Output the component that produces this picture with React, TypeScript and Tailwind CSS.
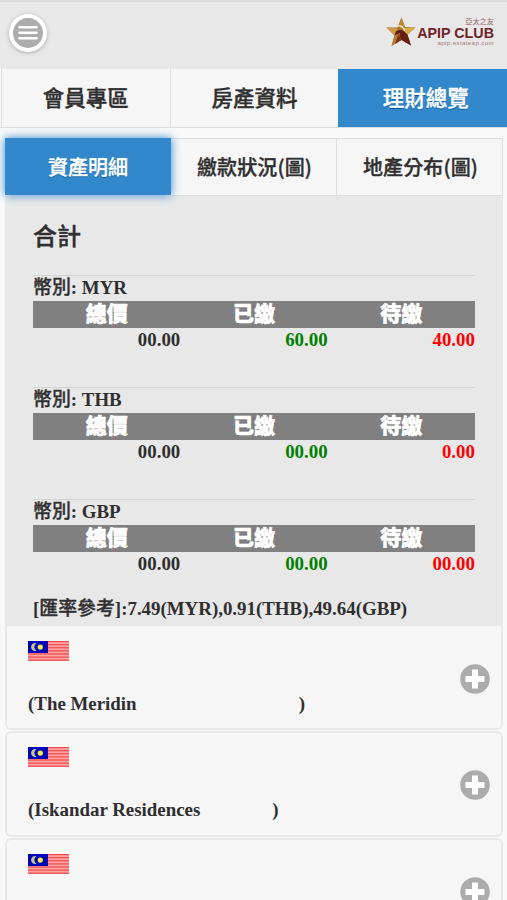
import React, { useState } from "react";

const mainTabs = ["會員專區", "房產資料", "理財總覽"];
const subTabs = ["資產明細", "繳款狀況(圖)", "地產分布(圖)"];

const totals = [
	{ currency: "MYR", total: "00.00", paid: "60.00", unpaid: "40.00" },
	{ currency: "THB", total: "00.00", paid: "00.00", unpaid: "0.00" },
	{ currency: "GBP", total: "00.00", paid: "00.00", unpaid: "00.00" },
];

const properties = [
	{ name: "The Meridin", gap: "w-[162px]" },
	{ name: "Iskandar Residences", gap: "w-[72px]" },
	{ name: "", gap: "" },
];

const Logo = () => (
	<div className="flex items-center mr-[13px] -mt-[3px]">
		<svg className="shrink-0" width="30" height="30" viewBox="0 0 30 30">
			<path d="M15.5 0.5 L19 10 L29.5 10.5 L21.5 17.5 L25 28.5 L15.5 23 L5.5 29 L8.5 18.5 L0.5 10.5 L11.5 10.5 Z" fill="#a8722b" />
			<path d="M15.5 0.5 L19 10 L17 13 Q14.5 9.5 11.5 10.5 Z" fill="#b88a38" />
			<path d="M0.5 10.5 L11 11.5 L14 15 L8.5 18.5 Z" fill="#d09a48" />
			<path d="M8.5 18.5 L10 14 Q14 12 18 14 L21.5 17.5 L25 28.5 L15.5 23 L13 17 Z" fill="#642012" />
			<path d="M8.5 18.5 L14 16 L12.5 23 L5.5 29 Z" fill="#b87932" />
			<path d="M12.5 17 L15.5 23 L9 27 Z" fill="#7b3418" />
			<path d="M18.5 11 L29.5 10.5 L21.5 17.5 L18 14 Z" fill="#d6ae48" />
			<path d="M12 9 Q17.5 8.5 18.5 14" fill="none" stroke="#f9efd5" strokeWidth="1.3" />
		</svg>
		<div className="flex flex-col items-end w-[78px] font-['Liberation_Sans','Noto_Sans_CJK_TC',sans-serif] text-[#6f2527] whitespace-nowrap">
			<span className="text-[7.2px] leading-[8px] text-[#956565]">亞太之友</span>
			<span className="text-[14.3px] leading-[14px] font-bold">APIP CLUB</span>
			<span className="text-[6.2px] leading-[6px] tracking-[0.35px] text-[#a57575]">apip.estateap.com</span>
		</div>
	</div>
);

const Flag = () => (
	<svg className="block" width="41" height="20" viewBox="0 0 41 20">
		<rect width="41" height="20" fill="#ffa3a3" />
		{[0, 1, 2, 3, 4, 5, 6].map((i) => (
			<rect key={i} y={i * 3.1} width="41" height="1.2" fill="#ee4a4e" />
		))}
		<rect width="20" height="12" fill="#0505b8" />
		<path d="M8.3 2.2 A4 4 0 1 0 8.3 9.8 A4.6 4.6 0 0 1 8.3 2.2 Z" fill="#c9c98a" />
		<circle cx="12.3" cy="6.1" r="2.6" fill="#f5f04e" />
	</svg>
);

const PlusIcon = () => (
	<svg className="block shrink-0" width="30" height="30" viewBox="0 0 30 30">
		<circle cx="15" cy="15" r="14.8" fill="#acacac" />
		<path d="M12 5.5h6v6.5h6.5v6h-6.5v6.5h-6v-6.5h-6.5v-6h6.5z" fill="#fff" />
	</svg>
);

const App = () => {
	const [activeMain, setActiveMain] = useState(2);
	const [activeSub, setActiveSub] = useState(0);

	return (
		<div className="w-full h-[900px] overflow-hidden bg-[#f9f9f9] text-[#2f2f2f] font-['Liberation_Serif','Noto_Sans_CJK_TC',serif]">
			<header className="flex items-center justify-between h-[69px] bg-[#e8e8e8] border-t-2 border-[#dddddd] pb-[5px]">
				<button className="flex items-center justify-center ml-[9px] w-[38px] h-[38px] rounded-full bg-white shadow-[0_1px_4px_rgba(0,0,0,0.25)]">
					<svg width="30" height="30" viewBox="0 0 30 30">
						<circle cx="15" cy="15" r="15" fill="#acacac" />
						<path d="M6.5 9.2h17M6.5 14.7h17M6.5 20.2h17" stroke="#fff" strokeWidth="2.6" strokeLinecap="round" />
					</svg>
				</button>
				<Logo />
			</header>

			<nav className="grid grid-cols-3 h-[59px] pl-[1px] border-b border-[#dddddd] font-['Noto_Sans_CJK_TC',sans-serif] text-[21.5px] font-medium [-webkit-text-stroke:0.35px]">
				{mainTabs.map((tab, index) => (
					<button
						key={tab}
						onClick={() => setActiveMain(index)}
						className={
							index === activeMain
								? "bg-[#3388cc] text-white pl-[6px] pb-px [text-shadow:0_1px_1px_#005599]"
								: "bg-[#f6f6f6] border-l border-[#dddddd] pb-px"
						}
					>
						{tab}
					</button>
				))}
			</nav>

			<main className="mx-[5px] mt-[10px] w-[498px]">
				<div className="grid grid-cols-3 h-[58px] font-['Noto_Sans_CJK_TC',sans-serif] text-[20px] font-medium [-webkit-text-stroke:0.35px]">
					{subTabs.map((tab, index) => (
						<button
							key={tab}
							onClick={() => setActiveSub(index)}
							className={
								index === activeSub
									? "relative z-10 h-[57px] bg-[#3388cc] text-white shadow-[0_0_9px_#3388cc] [text-shadow:0_1px_1px_#005599]"
									: "bg-[#f6f6f6] border-y border-r border-[#dddddd] pl-[2px] pb-px whitespace-nowrap tracking-[0.1px]"
							}
						>
							{tab}
						</button>
					))}
				</div>

				<section className="h-[428px] bg-[#e8e8e8] px-7 pt-[22px] text-[18.9px] font-bold">
					<h2 className="h-[57px] leading-[34px] text-[24px] font-medium font-['Noto_Sans_CJK_TC',sans-serif] [-webkit-text-stroke:0.4px]">合計</h2>
					{totals.map((row) => (
						<div key={row.currency} className="h-[112px] border-t border-[#d2d2d2]">
							<div className="h-[25px] leading-[24px]">
								<span className="font-medium [-webkit-text-stroke:0.35px]">幣別</span>: {row.currency}
							</div>
							<div className="grid grid-cols-3 h-[27px] leading-[27px] bg-[#808080] text-white text-center text-[21px] font-black [-webkit-text-stroke:0.5px]">
								<span>總價</span>
								<span>已繳</span>
								<span>待繳</span>
							</div>
							<div className="grid grid-cols-3 leading-[23px] text-right">
								<span>{row.total}</span>
								<span className="text-[#008000]">{row.paid}</span>
								<span className="text-[#ff0000]">{row.unpaid}</span>
							</div>
						</div>
					))}
					<p className="-mt-[14px] leading-[24px] whitespace-nowrap">
						[<span className="font-medium [-webkit-text-stroke:0.35px]">匯率參考</span>]:7.49(MYR),0.91(THB),49.64(GBP)
					</p>
				</section>

				{properties.map((property, index) => (
					<div
						key={index}
						className={`flex justify-between mb-px border-2 border-[#e8e8e8] bg-[#f6f6f6] pl-[21px] pr-[11px] ${
							index === 0 ? "h-[106px] pt-px rounded-b-md" : "h-[106px] rounded-md"
						}`}
					>
						<div className="pt-[14px] text-[18.9px] font-bold">
							<Flag />
							{property.name && (
								<div className="flex mt-[31px] leading-[24px]">
									({property.name}
									<span className={property.gap}></span>)
								</div>
							)}
						</div>
						<div className="pt-[37px]">
							<PlusIcon />
						</div>
					</div>
				))}
			</main>
		</div>
	);
};

export default App;
